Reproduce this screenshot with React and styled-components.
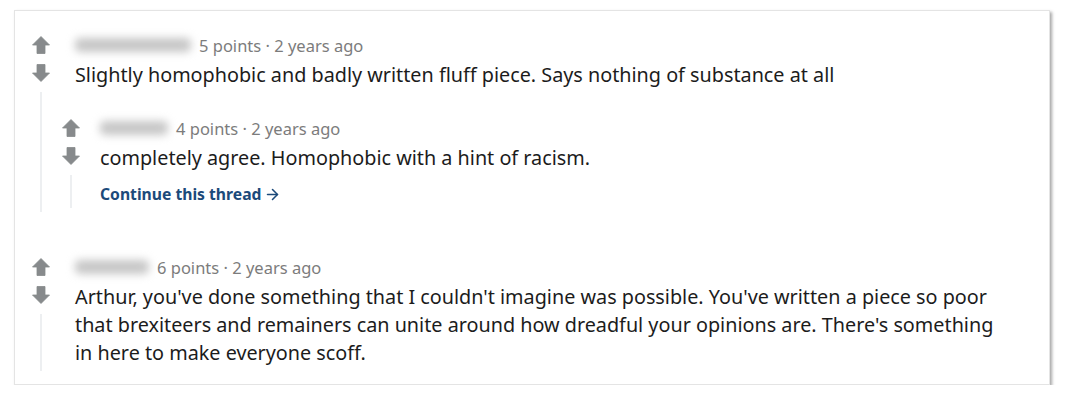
import styled, { createGlobalStyle } from "styled-components";
import { ArrowRight } from "lucide-react";

const GlobalStyle = createGlobalStyle`
  body {
    margin: 0;
    background: #fff;
    font-family: "Noto Sans", "Liberation Sans", sans-serif;
  }
`;

const comments = [
  {
    id: 1,
    nameWidth: 116,
    points: 5,
    age: "2 years ago",
    lines: [
      "Slightly homophobic and badly written fluff piece. Says nothing of substance at all",
    ],
    replies: [
      {
        id: 2,
        nameWidth: 68,
        indent: 20,
        points: 4,
        age: "2 years ago",
        lines: ["completely agree. Homophobic with a hint of racism."],
        more: true,
      },
    ],
  },
  {
    id: 3,
    nameWidth: 74,
    points: 6,
    age: "2 years ago",
    lines: [
      "Arthur, you've done something that I couldn't imagine was possible. You've written a piece so poor",
      "that brexiteers and remainers can unite around how dreadful your opinions are. There's something",
      "in here to make everyone scoff.",
    ],
  },
];

const Arrow = ({ down }) => (
  <ArrowIcon viewBox="0 0 18 18" $down={down}>
    <path
      d="M9 0.5 L17.5 9 L13 9 L13 17.5 L5 17.5 L5 9 L0.5 9 Z"
      fill="currentColor"
      stroke="currentColor"
      strokeWidth="0.8"
      strokeLinejoin="round"
    />
  </ArrowIcon>
);

const Comment = ({ data }) => {
  const indent = data.indent ?? 25;
  return (
    <CommentRow>
      <VoteColumn>
        <Arrow />
        <Arrow down />
        <ThreadLine />
      </VoteColumn>
      <Main>
        <Meta $indent={indent}>
          <BlurName $w={data.nameWidth} />
          {data.points} points&nbsp;·&nbsp;{data.age}
        </Meta>
        <Body $indent={indent}>
          {data.lines.map((l, i) => (
            <div key={i}>{l}</div>
          ))}
        </Body>
        {data.more && (
          <MoreLink $indent={indent}>
            Continue this thread
            <ArrowRight size={17} strokeWidth={2.2} />
          </MoreLink>
        )}
        {data.replies && (
          <Replies>
            {data.replies.map((r) => (
              <Comment key={r.id} data={r} />
            ))}
          </Replies>
        )}
      </Main>
    </CommentRow>
  );
};

const App = () => {
  return (
    <Page>
      <GlobalStyle />
      <Card>
        {comments.map((c) => (
          <Comment key={c.id} data={c} />
        ))}
      </Card>
    </Page>
  );
};

const Page = styled.div`
  padding: 10px 20px 0 14px;
`;

const Card = styled.div`
  width: 1036px;
  height: 375px;
  box-sizing: border-box;
  background: #fff;
  border: 1px solid #e4e4e4;
  box-shadow: 2px 2px 3px rgba(0, 0, 0, 0.35);
  padding: 25px 0 0 17px;
  display: flex;
  flex-direction: column;
  gap: 46px;
`;

const CommentRow = styled.div`
  display: grid;
  grid-template-columns: 18px 1fr;
`;

const VoteColumn = styled.div`
  display: flex;
  flex-direction: column;
  align-items: center;
  color: #878a8c;
`;

const ArrowIcon = styled.svg`
  width: 18px;
  height: 18px;
  margin-top: ${(p) => (p.$down ? "10px" : "0")};
  transform: ${(p) => (p.$down ? "rotate(180deg)" : "none")};
`;

const ThreadLine = styled.div`
  flex: 1;
  width: 2px;
  margin-top: 10px;
  background: #edeff1;
`;

const Main = styled.div`
  padding-bottom: 4px;
`;

const Meta = styled.div`
  display: flex;
  align-items: center;
  padding-left: ${(p) => p.$indent}px;
  height: 18px;
  font-size: 16.5px;
  color: #7c7c7c;
`;

const BlurName = styled.span`
  display: inline-block;
  width: ${(p) => p.$w}px;
  height: 14px;
  margin-right: 8px;
  border-radius: 5px;
  background: #c6c6c6;
  filter: blur(4px);
`;

const Body = styled.div`
  margin-top: 7px;
  padding-left: ${(p) => p.$indent}px;
  font-size: 19.8px;
  line-height: 28px;
  color: #1c1c1c;
`;

const MoreLink = styled.div`
  display: flex;
  align-items: center;
  gap: 3px;
  margin-top: 12px;
  padding-left: ${(p) => p.$indent}px;
  font-size: 15.7px;
  line-height: 20px;
  font-weight: 700;
  color: #1c4a7a;
`;

const Replies = styled.div`
  margin-top: 30px;
  padding-left: 12px;
`;

export default App;
